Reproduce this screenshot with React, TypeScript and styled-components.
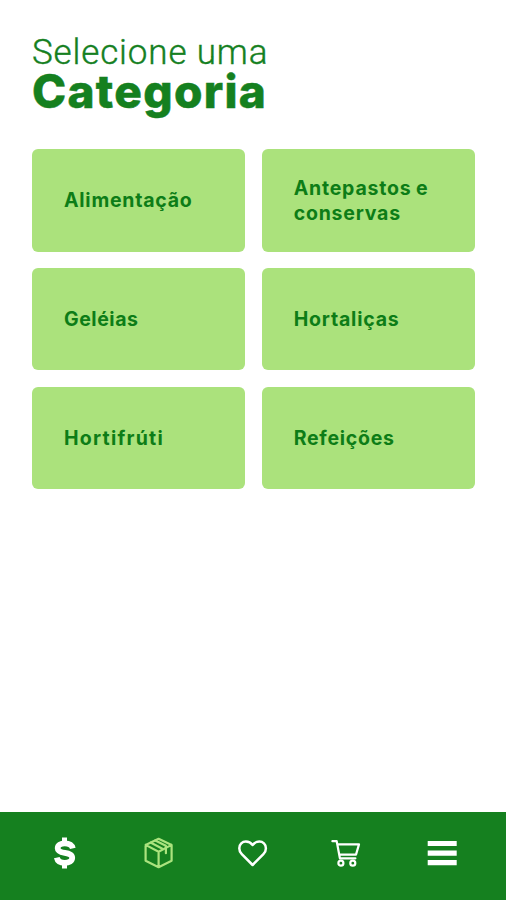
import React from "react";
import styled, { createGlobalStyle } from "styled-components";

const Global = createGlobalStyle`
  * { box-sizing: border-box; }
  body { margin: 0; background: #fff; font-family: Inter, "Open Sans", sans-serif; }
`;
const Screen = styled.div`
  height: 900px;
  display: flex;
  flex-direction: column;
  color: #15801f;
`;
const Main = styled.main`
  flex: 1;
  padding: 33px 31px 0 32px;
`;
const Title = styled.h1`
  display: flex;
  flex-direction: column;
  margin: 0;
  height: 116px;
  font-weight: 400;
`;
const TitleLead = styled.span`
  font: 300 35px/39px Roboto, sans-serif;
  letter-spacing: 0.85px;
  -webkit-text-stroke: 0.4px currentColor;
`;
const TitleStrong = styled.strong`
  font: 800 46px/39px Inter, sans-serif;
  letter-spacing: 1.3px;
  -webkit-text-stroke: 0.5px currentColor;
`;
const Grid = styled.div`
  display: grid;
  grid-template-columns: 1fr 1fr;
  grid-auto-rows: 102.6px;
  gap: 16.3px;
`;
const Card = styled.button<{ $tracking: number }>`
  border: 0;
  border-radius: 6px;
  background: #abe27c;
  color: #0d7d17;
  padding: 1px 24px 0 32px;
  text-align: left;
  font: 750 19.5px/25px Inter, sans-serif;
  letter-spacing: ${(p) => p.$tracking}px;
  word-spacing: -1px;
`;
const Nav = styled.nav`
  display: flex;
  justify-content: space-between;
  height: 88px;
  padding: 18px 41px 0;
  background: #15801f;
`;
const NavButton = styled.button<{ $active?: boolean }>`
  display: grid;
  place-items: center;
  width: 46px;
  height: 46px;
  padding: 0;
  border: 0;
  background: none;
  color: ${(p) => (p.$active ? "#abe37e" : "#fff")};
`;

const categories = [
  { name: "Alimentação", tracking: 0.75 },
  { name: "Antepastos e conservas", tracking: 0.8 },
  { name: "Geléias", tracking: 0.55 },
  { name: "Hortaliças", tracking: 0.8 },
  { name: "Hortifrúti", tracking: 1.25 },
  { name: "Refeições", tracking: 0.75 },
];

const DollarIcon = () => (
  <svg width="24" height="34" viewBox="0 0 24 34" fill="none" stroke="currentColor">
    <path d="M12.5 1.5v5M12.5 27.5v5" strokeWidth="5" />
    <path d="M20.8 12.4C20 9.2 17 7.4 12.8 7.4c-4.2 0-7.1 1.9-7.1 4.8 0 3.2 3.3 4 7.1 4.7 4.6.8 7.4 1.6 7.4 4.9 0 3.2-3.2 5-7.4 5-4.6 0-7.4-2.3-8-5.2" strokeWidth="5.8" />
  </svg>
);

const BoxIcon = () => (
  <svg width="30" height="32" viewBox="0 0 30 32" fill="none" stroke="currentColor" strokeWidth="2.2" strokeLinejoin="round" strokeLinecap="round">
    <path d="M14.6 1.8 27.6 7.9v15.9L14.6 30.2 1.6 23.8V7.9ZM1.6 7.9l13 6.8 13-6.8M14.6 14.7v15.5" />
    <path d="m6.6 5.6 11.8 6.1M11.3 3.5l10.6 5.3v7.4" />
  </svg>
);

const HeartIcon = () => (
  <svg width="30" height="28" viewBox="0 0 30 28" fill="none" stroke="currentColor" strokeWidth="2.5" strokeLinejoin="round">
    <path d="M14.6 26 3.8 15.2C1.4 12.9 1.3 10.8 1.3 9.2c0-3.9 3-6.6 6.6-6.6 2.7 0 5 1.2 6.7 3.4 1.7-2.2 4-3.4 6.7-3.4 3.6 0 6.6 2.7 6.6 6.6 0 1.6-.1 3.7-2.5 6Z" />
  </svg>
);

const CartIcon = () => (
  <svg width="30" height="30" viewBox="0 0 30 30" fill="none" stroke="currentColor" strokeWidth="2.2" strokeLinejoin="round" strokeLinecap="round">
    <path d="M0.4 3.2H4.7l3.2 17.1H23.4M5.4 6.4h21.6l-3 10.2H7.3" />
    <circle cx="8.9" cy="25.2" r="2.5" />
    <circle cx="20.8" cy="25.2" r="2.5" />
  </svg>
);

const CartFrame = styled.span`
  display: flex;
  padding-right: 1px;

  svg { overflow: visible; }
`;

const MenuIcon = () => (
  <svg width="30" height="26" viewBox="0 0 30 26" fill="currentColor">
    <path d="M.7 1h29v5.1H.7zM.7 10.6h29v5.1H.7zM.7 20.1h29v5.1H.7z" />
  </svg>
);

export default function App() {
  return (
    <>
      <Global />
      <Screen>
        <Main>
          <Title>
            <TitleLead>Selecione uma</TitleLead>
            <TitleStrong>Categoria</TitleStrong>
          </Title>
          <Grid>
            {categories.map((c) => (
              <Card key={c.name} $tracking={c.tracking}>{c.name}</Card>
            ))}
          </Grid>
        </Main>
        <Nav>
          <NavButton aria-label="Preços"><DollarIcon /></NavButton>
          <NavButton aria-label="Produtos" $active><BoxIcon /></NavButton>
          <NavButton aria-label="Favoritos"><HeartIcon /></NavButton>
          <NavButton aria-label="Carrinho"><CartFrame><CartIcon /></CartFrame></NavButton>
          <NavButton aria-label="Menu"><MenuIcon /></NavButton>
        </Nav>
      </Screen>
    </>
  );
}
